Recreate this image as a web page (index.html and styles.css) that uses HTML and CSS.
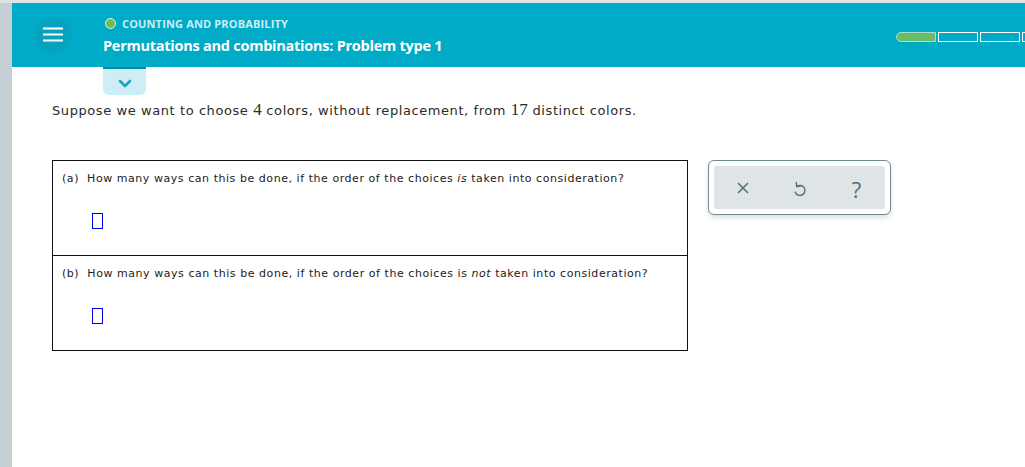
FILE: index.html
```html
<!DOCTYPE html>
<html>
<head>
<meta charset="utf-8">
<link rel="stylesheet" href="styles.css">
</head>
<body>
<div class="topline"></div>
<div class="app">
  <div class="rail"></div>
  <div class="main">
    <header class="header">
      <div class="menu">
        <svg width="20" height="16" viewBox="0 0 20 16"><path d="M0 1.5H20M0 7.5H20M0 13.5H20" stroke="#fff" stroke-width="2"/></svg>
      </div>
      <div class="titles">
        <div class="topic"><span class="dot"></span>COUNTING AND PROBABILITY</div>
        <div class="title">Permutations and combinations: Problem type 1</div>
      </div>
      <div class="progress">
        <span class="seg done"></span><span class="seg"></span><span class="seg"></span><span class="seg"></span>
      </div>
    </header>
    <div class="tabrow">
      <div class="tab">
        <svg width="14" height="9" viewBox="0 0 14 9"><path d="M2 2L7 7L12 2" fill="none" stroke="#1d9fc0" stroke-width="2.6" stroke-linecap="round" stroke-linejoin="round"/></svg>
      </div>
    </div>
    <p class="prompt">Suppose we want to choose <span class="num">4</span> colors, without replacement, from <span class="num">17</span> distinct colors.</p>
    <div class="work">
      <div class="table">
        <div class="row">
          <div class="q">(a)&nbsp; How many ways can this be done, if the order of the choices <i>is</i> taken into consideration?</div>
          <div class="ans"><span class="box"></span></div>
        </div>
        <div class="row">
          <div class="q">(b)&nbsp; How many ways can this be done, if the order of the choices is <i>not</i> taken into consideration?</div>
          <div class="ans"><span class="box"></span></div>
        </div>
      </div>
      <div class="tools">
        <div class="tools-inner">
          <span class="tool"><svg width="14" height="14" viewBox="0 0 14 14"><path d="M2 2L12 12M12 2L2 12" stroke="#4d6f7b" stroke-width="1.5"/></svg></span>
          <span class="tool"><svg width="14" height="18" viewBox="0 0 14 18"><path d="M3.8 7.6A5 5 0 1 1 2.3 13.2" fill="none" stroke="#4d6f7b" stroke-width="1.4" stroke-linecap="round"/><path d="M3.2 3.4L3.8 7.6L7.8 6.9" fill="none" stroke="#4d6f7b" stroke-width="1.4" stroke-linecap="round" stroke-linejoin="round"/></svg></span>
          <span class="tool help">?</span>
        </div>
      </div>
    </div>
  </div>
</div>
</body>
</html>
```
FILE: styles.css
```css
html, body {
  margin: 0;
  padding: 0;
  background: #fff;
}
body {
  width: 1025px;
  height: 467px;
  overflow: hidden;
  font-family: "DejaVu Sans", Verdana, sans-serif;
}
.topline {
  height: 3px;
  background: #dfe3e5;
}
.app {
  display: flex;
  height: 464px;
}
.rail {
  width: 12px;
  flex: none;
  background: #c5cfd4;
}
.main {
  flex: 1;
  min-width: 0;
}
.header {
  height: 64px;
  background: #00abc7;
  display: flex;
  align-items: center;
}
.menu {
  width: 36px;
  height: 36px;
  border-radius: 50%;
  background: #06a2be;
  margin-left: 23px;
  margin-top: -1px;
  display: flex;
  align-items: center;
  justify-content: center;
}
.titles {
  margin-left: 32px;
  display: flex;
  flex-direction: column;
  margin-top: 1px;
}
.topic {
  display: flex;
  align-items: center;
  font-family: "Open Sans", sans-serif;
  font-weight: 700;
  font-size: 11px;
  letter-spacing: 0.15px;
  color: #cdeef5;
  margin-left: 2px;
  height: 14px;
}
.dot {
  width: 9px;
  height: 9px;
  border-radius: 50%;
  background: #6cc04a;
  border: 1px solid #e6f7ee;
  margin-right: 6px;
}
.title {
  margin-top: 5px;
  font-family: "Open Sans", sans-serif;
  font-weight: 700;
  font-size: 14.5px;
  letter-spacing: -0.25px;
  color: #fff;
}
.progress {
  margin-left: auto;
  display: flex;
  gap: 2px;
  margin-top: 3px;
  margin-right: -37px;
}
.seg {
  width: 38px;
  height: 8px;
  border: 1px solid #fff;
}
.seg.done {
  background: #68bd6b;
  border-color: #a9dfd0;
  border-radius: 5px 0 0 5px;
}
.tabrow {
  padding-left: 91px;
}
.tab {
  width: 43px;
  background: #cdeef4;
  border-top: 2px solid #0a8aa3;
  border-radius: 0 0 6px 6px;
  display: flex;
  align-items: center;
  justify-content: center;
  box-sizing: border-box;
  height: 28px;
}
.tab svg {
  margin-top: 2px;
}
.prompt {
  margin: 6px 0 0 40px;
  font-size: 13px;
  letter-spacing: 0.58px;
  color: #2b2b2b;
  line-height: 18px;
}
.num {
  font-family: "Liberation Serif", serif;
  font-size: 17px;
  letter-spacing: 0;
}
.work {
  display: flex;
  align-items: flex-start;
  margin: 40px 0 0 40px;
}
.table {
  width: 636px;
  border: 1px solid #111;
  box-sizing: border-box;
}
.row + .row {
  border-top: 1px solid #111;
}
.row {
  height: 94px;
  padding: 11px 0 0 9px;
  box-sizing: border-box;
}
.row + .row {
  height: 95px;
}
.q {
  font-size: 11px;
  letter-spacing: 0.55px;
  color: #222;
  line-height: 14px;
}
.ans {
  padding: 27px 0 0 30px;
}
.box {
  display: block;
  width: 9px;
  height: 14px;
  border: 1px solid #0000ee;
}
.tools {
  margin-left: 20px;
  width: 183px;
  height: 55px;
  box-sizing: border-box;
  border: 1px solid #6f8c96;
  border-radius: 6px;
  padding: 5px;
  background: #fff;
  box-shadow: 0 3px 5px rgba(0,0,0,0.12);
}
.tools-inner {
  height: 43px;
  background: #dfe5e7;
  border-radius: 3px;
  display: grid;
  grid-template-columns: repeat(3, 57px);
  align-items: center;
  justify-items: center;
}
.tool {
  display: flex;
  align-items: center;
  justify-content: center;
}
.help {
  font-family: "Open Sans", sans-serif;
  font-size: 22px;
  color: #4d6f7b;
  line-height: 22px;
  padding-top: 2px;
}
```
